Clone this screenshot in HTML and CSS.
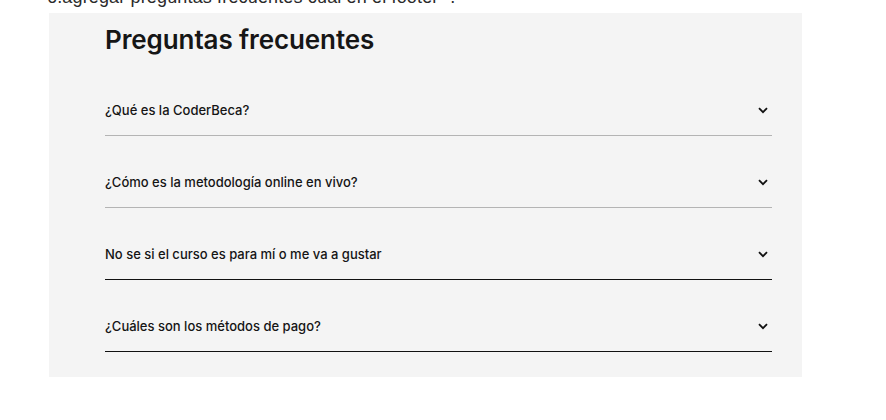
FILE: index.html
```html
<!DOCTYPE html>
<html lang="es">
<head>
<meta charset="utf-8">
<link rel="stylesheet" href="styles.css">
</head>
<body>
<p class="note">6.agregar preguntas frecuentes cual en el footer" .</p>
<section class="faq">
  <h2 class="faq-title">Preguntas frecuentes</h2>
  <div class="faq-list">
    <div class="faq-item faq-item--light">
      <span class="faq-q">¿Qué es la CoderBeca?</span>
      <svg class="chev" width="10" height="7" viewBox="0 0 10 7"><path d="M1 1.2 L5 5.2 L9 1.2" fill="none" stroke="#111" stroke-width="1.8"/></svg>
    </div>
    <div class="faq-item faq-item--light">
      <span class="faq-q">¿Cómo es la metodología online en vivo?</span>
      <svg class="chev" width="10" height="7" viewBox="0 0 10 7"><path d="M1 1.2 L5 5.2 L9 1.2" fill="none" stroke="#111" stroke-width="1.8"/></svg>
    </div>
    <div class="faq-item">
      <span class="faq-q">No se si el curso es para mí o me va a gustar</span>
      <svg class="chev" width="10" height="7" viewBox="0 0 10 7"><path d="M1 1.2 L5 5.2 L9 1.2" fill="none" stroke="#111" stroke-width="1.8"/></svg>
    </div>
    <div class="faq-item">
      <span class="faq-q">¿Cuáles son los métodos de pago?</span>
      <svg class="chev" width="10" height="7" viewBox="0 0 10 7"><path d="M1 1.2 L5 5.2 L9 1.2" fill="none" stroke="#111" stroke-width="1.8"/></svg>
    </div>
  </div>
</section>
</body>
</html>
```
FILE: styles.css
```css
html, body {
  margin: 0;
  padding: 0;
  background: #fff;
}
body {
  font-family: Inter, "Noto Sans", sans-serif;
  color: #151515;
}
.note {
  margin: -13px 0 6px 47px;
  font-family: "Liberation Sans", Arial, sans-serif;
  font-size: 18px;
  line-height: 20px;
  letter-spacing: 0.15px;
  color: #2a2a2a;
}
.faq {
  margin-left: 49px;
  width: 753px;
  box-sizing: border-box;
  background: #f4f4f4;
  padding: 11px 30px 25px 56px;
}
.faq-title {
  margin: 0;
  font-size: 26px;
  line-height: 32px;
  font-weight: 600;
  letter-spacing: -0.1px;
  color: #161616;
}
.faq-list {
  margin-top: 8px;
  display: flex;
  flex-direction: column;
}
.faq-item {
  display: flex;
  align-items: center;
  justify-content: space-between;
  height: 72px;
  box-sizing: border-box;
  padding: 36px 4px 15px 0;
  border-bottom: 1px solid #111;
}
.faq-item--light {
  border-bottom-color: #b4b4b4;
}
.faq-q {
  font-size: 13px;
  line-height: 20px;
  font-weight: 500;
  letter-spacing: 0;
  color: #151515;
}
.chev {
  display: block;
}
```
